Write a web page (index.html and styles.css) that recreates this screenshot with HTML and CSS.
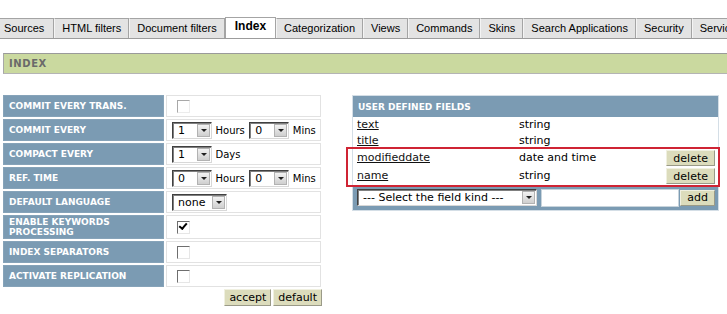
FILE: index.html
```html
<!DOCTYPE html>
<html lang="en">
<head>
    <meta charset="UTF-8">
    <title>Index settings</title>
    <link rel="stylesheet" href="styles.css">
</head>
<body>
    <div class="tabs">
        <a class="tab first">Sources</a>
        <a class="tab">HTML filters</a>
        <a class="tab">Document filters</a>
        <a class="tab active">Index</a>
        <a class="tab">Categorization</a>
        <a class="tab">Views</a>
        <a class="tab">Commands</a>
        <a class="tab">Skins</a>
        <a class="tab">Search Applications</a>
        <a class="tab">Security</a>
        <a class="tab">Services</a>
    </div>

    <div class="section-bar">INDEX</div>

    <div class="content">
        <form class="settings">
            <table class="settings-table">
                <tr>
                    <td class="label">COMMIT EVERY TRANS.</td>
                    <td class="value"><span class="check light"></span></td>
                </tr>
                <tr>
                    <td class="label">COMMIT EVERY</td>
                    <td class="value">
                        <span class="select w40"><span class="sel-text">1</span><span class="arrow"></span></span>
                        <span class="unit">Hours</span>
                        <span class="select w40"><span class="sel-text">0</span><span class="arrow"></span></span>
                        <span class="unit">Mins</span>
                    </td>
                </tr>
                <tr>
                    <td class="label">COMPACT EVERY</td>
                    <td class="value">
                        <span class="select w40"><span class="sel-text">1</span><span class="arrow"></span></span>
                        <span class="unit">Days</span>
                    </td>
                </tr>
                <tr>
                    <td class="label">REF. TIME</td>
                    <td class="value">
                        <span class="select w40"><span class="sel-text">0</span><span class="arrow"></span></span>
                        <span class="unit">Hours</span>
                        <span class="select w40"><span class="sel-text">0</span><span class="arrow"></span></span>
                        <span class="unit">Mins</span>
                    </td>
                </tr>
                <tr>
                    <td class="label">DEFAULT LANGUAGE</td>
                    <td class="value">
                        <span class="select w55"><span class="sel-text">none</span><span class="arrow"></span></span>
                    </td>
                </tr>
                <tr class="tall">
                    <td class="label">ENABLE KEYWORDS<br>PROCESSING</td>
                    <td class="value"><span class="check checked"></span></td>
                </tr>
                <tr>
                    <td class="label">INDEX SEPARATORS</td>
                    <td class="value"><span class="check"></span></td>
                </tr>
                <tr>
                    <td class="label">ACTIVATE REPLICATION</td>
                    <td class="value"><span class="check"></span></td>
                </tr>
            </table>
            <div class="actions">
                <button type="button" class="btn">accept</button>
                <button type="button" class="btn">default</button>
            </div>
        </form>

        <div class="fields-panel">
            <table class="fields">
                <tr>
                    <th colspan="3">USER DEFINED FIELDS</th>
                </tr>
                <tr>
                    <td class="name"><a href="#">text</a></td>
                    <td class="kind">string</td>
                    <td class="ops"></td>
                </tr>
                <tr>
                    <td class="name"><a href="#">title</a></td>
                    <td class="kind">string</td>
                    <td class="ops"></td>
                </tr>
                <tr class="custom">
                    <td class="name"><a href="#">modifieddate</a></td>
                    <td class="kind">date and time</td>
                    <td class="ops"><button type="button" class="btn small">delete</button></td>
                </tr>
                <tr class="custom">
                    <td class="name"><a href="#">name</a></td>
                    <td class="kind">string</td>
                    <td class="ops"><button type="button" class="btn small">delete</button></td>
                </tr>
                <tr class="add-row">
                    <td colspan="3">
                        <div class="add-line">
                            <span class="select w180"><span class="sel-text">--- Select the field kind ---</span><span class="arrow"></span></span>
                            <span class="text-input"></span>
                            <button type="button" class="btn small">add</button>
                        </div>
                    </td>
                </tr>
            </table>
            <div class="highlight"></div>
        </div>
    </div>
</body>
</html>
```

FILE: styles.css
```css
:root {
    --tab-bg: #e3e3e3;
    --tab-border: #a4a4a4;
    --bar-green: #cad99f;
    --steel: #7b9bb3;
    --btn-bg: #dcdcbc;
    --cell-border: #e2e2e2;
}

body {
    margin: 0;
    background: #ffffff;
    font-family: 'DejaVu Sans', Verdana, sans-serif;
    font-size: 11px;
    color: #000;
    overflow: hidden;
}

/* tabs */
.tabs {
    display: flex;
    align-items: flex-end;
    margin-top: 17px;
    height: 21px;
    border-bottom: 1px solid #9c9c9c;
    white-space: nowrap;
    overflow: hidden;
}

.tab {
    display: block;
    height: 19px;
    line-height: 19px;
    padding: 0 7px;
    background: var(--tab-bg);
    border: 1px solid var(--tab-border);
    border-bottom: none;
    border-left-color: #f4f4f4;
    font-family: 'Liberation Sans', Arial, sans-serif;
    font-size: 11px;
    color: #000;
    flex-shrink: 0;
}

.tab.first {
    border-left: none;
    padding: 0 9px 0 4px;
}

.tab.active {
    height: 21px;
    line-height: 17px;
    background: #fff;
    font-weight: bold;
    font-size: 12px;
    padding: 0 9px;
    margin-bottom: -1px;
    border-left-color: var(--tab-border);
    position: relative;
}

/* green section header */
.section-bar {
    margin: 14px 0 0 3px;
    height: 19px;
    line-height: 19px;
    padding-left: 5px;
    background: var(--bar-green);
    border-top: 1px solid #9a9a9a;
    border-left: 1px solid #a8a8a8;
    border-bottom: 1px solid #b4b4b4;
    font-size: 10px;
    font-weight: bold;
    letter-spacing: 0.6px;
    color: #6a6a6a;
}

.content {
    display: flex;
    align-items: flex-start;
    padding: 19px 0 0 1px;
}

/* left settings table */
.settings {
    width: 322px;
    margin: 0;
}

.settings-table {
    border-collapse: separate;
    border-spacing: 2px;
}

.settings-table td {
    height: 20px;
    padding: 0;
}

.settings-table .tall td {
    height: 22px;
}

.label {
    width: 154px;
    padding-left: 5px !important;
    background: var(--steel);
    color: #fff;
    font-size: 9px;
    font-weight: bold;
    line-height: 10px;
    border: 1px solid #86a3b9;
}

.value {
    width: 148px;
    padding-left: 5px !important;
    border: 1px solid var(--cell-border);
    white-space: nowrap;
}

.unit {
    font-size: 10px;
    vertical-align: middle;
    margin: 0 1px 0 0;
}

.check {
    display: inline-block;
    width: 11px;
    height: 11px;
    margin-left: 5px;
    vertical-align: middle;
    background: #fff;
    border: 1px solid;
    border-color: #6e6e6e #e6e6e6 #e6e6e6 #6e6e6e;
    position: relative;
}

.check.light {
    border-color: #a8a8a8 #ececec #ececec #a8a8a8;
}

.check.checked::after {
    content: "";
    position: absolute;
    left: 2px;
    top: 2px;
    width: 6px;
    height: 3px;
    border-left: 2px solid #000;
    border-bottom: 2px solid #000;
    transform: rotate(-50deg);
    transform-origin: 30% 60%;
}

/* fake classic select boxes */
.select {
    display: inline-flex;
    align-items: center;
    justify-content: space-between;
    height: 15px;
    vertical-align: middle;
    background: #fff;
    border: 1px solid;
    border-color: #404040 #d8d8d8 #d8d8d8 #404040;
    box-shadow: inset 1px 1px 0 #808080;
    padding: 0 1px 0 5px;
    box-sizing: content-box;
}

.w40 { width: 32px; }
.w55 { width: 47px; }
.w180 { width: 172px; }

.sel-text {
    font-size: 11px;
    line-height: 15px;
}

.arrow {
    width: 13px;
    height: 13px;
    margin-left: 2px;
    background: linear-gradient(#f2f2f2, #cfcfcf);
    border: 1px solid #b2b2b2;
    box-sizing: border-box;
    position: relative;
    flex-shrink: 0;
}

.arrow::after {
    content: "";
    position: absolute;
    left: 3px;
    top: 4px;
    border-left: 3px solid transparent;
    border-right: 3px solid transparent;
    border-top: 3px solid #202020;
}

/* buttons */
.btn {
    font-family: 'DejaVu Sans', Verdana, sans-serif;
    font-size: 11px;
    background: var(--btn-bg);
    border: 1px solid;
    border-color: #f0f0e0 #9a9a88 #9a9a88 #f0f0e0;
    padding: 0 4px;
    height: 17px;
    line-height: 14px;
    color: #000;
}

.actions {
    display: flex;
    justify-content: flex-end;
    gap: 2px;
    padding-right: 1px;
}

/* user defined fields */
.fields-panel {
    position: relative;
    margin-left: 29px;
    margin-top: 2px;
}

.fields {
    width: 367px;
    border-collapse: collapse;
    border: 1px solid #d4dee6;
}

.fields th {
    height: 21px;
    padding: 0 0 0 5px;
    text-align: left;
    background: var(--steel);
    color: #fff;
    font-size: 9px;
    font-weight: bold;
}

.fields td {
    padding: 0;
    height: 16px;
    line-height: 14px;
}

.fields .custom td {
    height: 18px;
}

.fields .name {
    width: 164px;
    padding-left: 4px;
}

.fields .name a {
    color: #111;
}

.fields .kind {
    width: 150px;
}

.fields .ops {
    text-align: right;
    padding-right: 3px;
}

.btn.small {
    display: block;
    margin-left: auto;
    height: 16px;
    line-height: 13px;
    padding: 0 6px;
}

.fields .add-row td {
    background: var(--steel);
    height: 25px;
}

.add-line {
    display: flex;
    align-items: center;
    padding: 0 3px 0 4px;
}

.text-input {
    width: 136px;
    height: 16px;
    margin-left: 4px;
    background: #fff;
    border: 1px solid #c8d4dc;
}

.add-line .btn {
    margin-left: auto;
}

/* red annotation frame over the custom rows */
.highlight {
    position: absolute;
    left: -6px;
    top: 52px;
    width: 370px;
    height: 36px;
    border: 2px solid #cf2434;
    pointer-events: none;
}
```
